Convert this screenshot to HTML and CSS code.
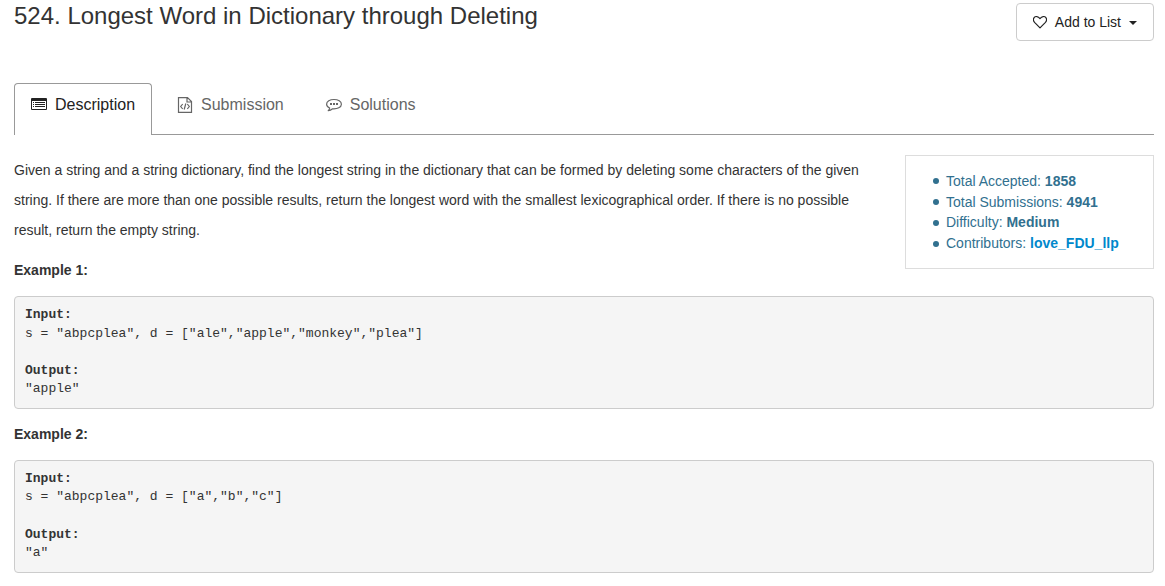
FILE: index.html
```html
<!DOCTYPE html>
<html lang="en">
<head>
<meta charset="utf-8">
<title>Longest Word in Dictionary through Deleting</title>
<link rel="stylesheet" href="styles.css">
</head>
<body>
<main class="page">
  <header class="head">
    <h1 class="title">524. Longest Word in Dictionary through Deleting</h1>
    <button class="add" type="button">
      <svg width="14" height="14" viewBox="0 0 14 14" fill="none" stroke="currentColor" stroke-width="1.2" stroke-linejoin="round" aria-hidden="true"><path d="M7 12.8 1.8 7.6C.3 6 .2 3.700 1.300 2.400 2.500 1 5 1.200 7 3.600 9 1.200 11.500 1 12.700 2.400 13.800 3.700 13.700 6 12.200 7.600Z"/></svg>
      <span class="add-label">Add to List</span>
      <span class="caret"></span>
    </button>
  </header>

  <nav class="tabs">
    <a class="tab active" href="#description">
      <svg width="16" height="16" viewBox="0 0 16 16" aria-hidden="true"><path fill="currentColor" fill-rule="evenodd" d="M1 1h14a1 1 0 0 1 1 1v10a1 1 0 0 1-1 1H1a1 1 0 0 1-1-1V2a1 1 0 0 1 1-1ZM1 4v8h14V4ZM2 5h1v1H2ZM2 7h1v1H2ZM2 9h1v1H2ZM4 5h10v1H4ZM4 7h10v1H4ZM4 9h10v1H4Z"/></svg>
      Description
    </a>
    <a class="tab" href="#submission">
      <svg width="16" height="16" viewBox="0 0 16 16" fill="none" stroke="currentColor" stroke-width="1.200" aria-hidden="true"><path d="M1.500.6H10.500L14.500 4.500V15.400H1.500ZM10 .6V5H14.500M5.700 7 3.700 9.500 5.700 12M10.300 7 12.300 9.500 10.300 12M8.800 6.500 7.200 12.500"/></svg>
      Submission
    </a>
    <a class="tab" href="#solutions">
      <svg width="16" height="16" viewBox="0 0 16 16" aria-hidden="true"><path fill="none" stroke="currentColor" stroke-width="1.200" stroke-linejoin="round" d="M8 2.500C3.900 2.500.6 4.500.6 7.200.6 8.900 1.900 10.200 3.700 11 3.500 12.200 3 13 2.200 13.700 4 13.500 5.500 12.700 6.600 11.800 11.400 12.200 15.400 10.200 15.400 7.200 15.400 4.500 12.100 2.500 8 2.500Z"/><path fill="currentColor" d="M4 6h2v2H4ZM7 6h2v2H7ZM10 6h2v2H10Z"/></svg>
      Solutions
    </a>
  </nav>

  <section id="description">
    <div class="intro">
      <div class="text">
        <p class="question">Given a string and a string dictionary, find the longest string in the dictionary that can be formed by deleting some characters of the given string. If there are more than one possible results, return the longest word with the smallest lexicographical order. If there is no possible result, return the empty string.</p>
        <p class="example"><b>Example 1:</b></p>
      </div>
      <aside class="stats">
        <ul class="stats-list">
          <li>Total Accepted: <strong>1858</strong></li>
          <li>Total Submissions: <strong>4941</strong></li>
          <li>Difficulty: <strong>Medium</strong></li>
          <li>Contributors: <a class="contributor" href="#contributor">love_FDU_llp</a></li>
        </ul>
      </aside>
    </div>
<pre class="code"><b>Input:</b>
s = "abpcplea", d = ["ale","apple","monkey","plea"]

<b>Output:</b>
"apple"</pre>
    <p class="example"><b>Example 2:</b></p>
<pre class="code"><b>Input:</b>
s = "abpcplea", d = ["a","b","c"]

<b>Output:</b>
"a"</pre>
  </section>
</main>
</body>
</html>
```

FILE: styles.css
```css
* { box-sizing: border-box; }

body {
  margin: 0;
  background: #fff;
  color: #333;
  font: 14px/30px "Liberation Sans", Arial, sans-serif;
}

.page { padding: 3px 11px 12px 14px; }

.head {
  display: flex;
  justify-content: space-between;
  align-items: flex-start;
}

.title {
  margin: 0;
  font-size: 24px;
  line-height: 26px;
  font-weight: 400;
}

.add {
  display: flex;
  align-items: center;
  height: 38px;
  padding: 0 16px;
  border: 1px solid #ccc;
  border-radius: 4px;
  background: #fff;
  color: #222;
  font: 14px/20px "Liberation Sans", Arial, sans-serif;
}

.add-label { margin: 0 8px; }

.caret {
  margin-top: 2px;
  border-top: 4px solid currentColor;
  border-left: 4px solid transparent;
  border-right: 4px solid transparent;
}

.tabs {
  display: flex;
  margin-top: 42px;
  border-bottom: 1px solid #999;
}

.tab {
  display: flex;
  gap: 8px;
  align-items: center;
  height: 52px;
  margin: 0 8px -1px 0;
  padding: 0 16px 10px;
  border: 1px solid transparent;
  border-bottom: 0;
  border-radius: 4px 4px 0 0;
  color: #666;
  font-size: 16px;
  text-decoration: none;
}

.tab.active {
  border-color: #999;
  background: #fff;
  color: #222;
}

.intro {
  display: flex;
  justify-content: space-between;
  align-items: flex-start;
  gap: 20px;
  margin-top: 20px;
}

.text { flex: 1; }

.question { margin: 0; }

.example {
  margin: 10px 0 11px;
}

.stats {
  flex: none;
  width: 249px;
  padding: 15px 24px 14px 27px;
  border: 1px solid #ddd;
  color: #31708f;
  line-height: 1.48;
}

.stats-list {
  margin: 0;
  padding: 0;
  list-style: none;
}

.stats-list li {
  display: flex;
  align-items: center;
  white-space: pre;
}

.stats-list li::before {
  content: "";
  width: 6px;
  height: 6px;
  margin-right: 7px;
  border-radius: 50%;
  background: currentColor;
}

.contributor {
  color: #08c;
  font-weight: 700;
  text-decoration: none;
}

.code {
  margin: 0;
  padding: 9px 10px;
  border: 1px solid #ccc;
  border-radius: 4px;
  background: #f5f5f5;
  font: 13px/1.43 "Liberation Mono", "Courier New", monospace;
}
```
